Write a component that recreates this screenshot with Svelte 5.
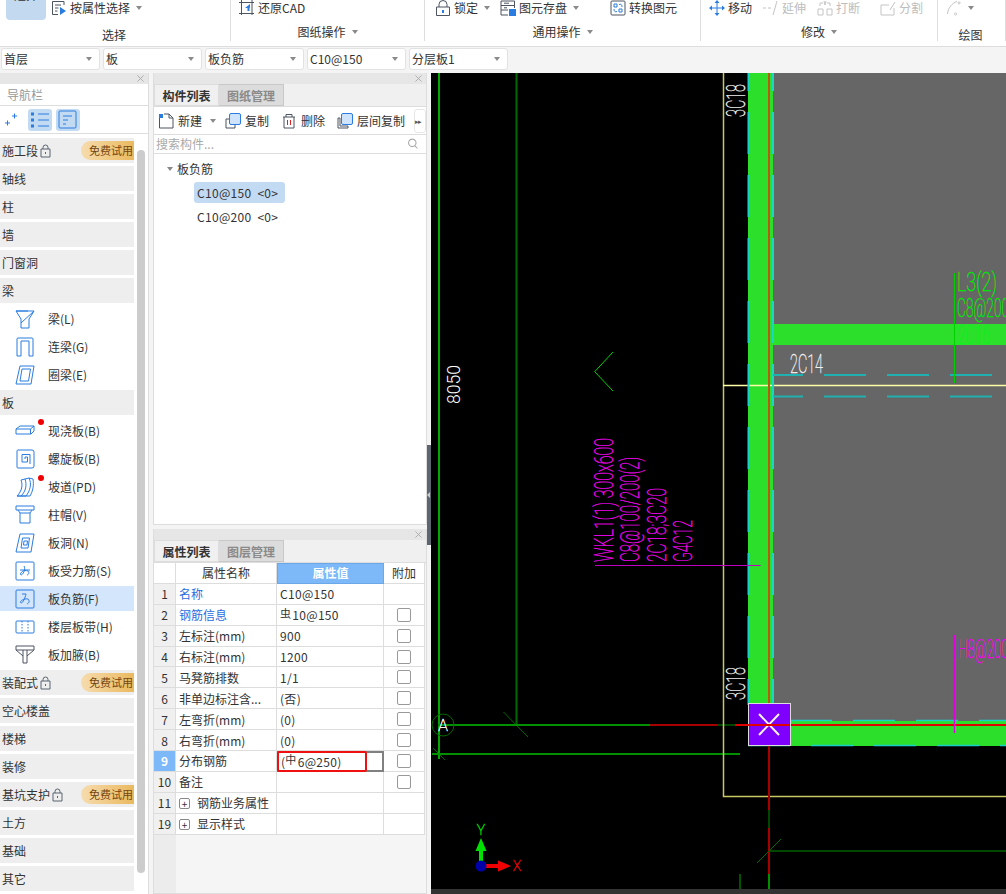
<script>
  const icons = {
    attr: [['dk', 'M13 5V1.5H1.5V14.5H7M4 5H10M4 8H7.5M4 11H6.5'], ['fb', 'M9 7L15 11L9 15Z']],
    cad: [['dk', 'M0 2.5H15M2.5 0V15M0 13.5H15M13 0V15'], ['fb', 'M11 4L6 8H8.5V11H10.5V8.5L11 7Z']],
    lock: [['dk', 'M4 7V4.5a4 4 0 0 1 8 0V7M1.5 7H14.5V15.5H1.5Z'], ['fb', 'M7 10H9V13H7Z']],
    store: [['dk', 'M14.5 8V1H1V15H8M1 5.5H14.5M1 10H8M4 3.2H9M4 7.8H7'], ['fb', 'M9 9H16V16H9Z']],
    convert: [['dk', 'M2 1H14a1 1 0 0 1 1 1V14a1 1 0 0 1-1 1H2a1 1 0 0 1-1-1V2a1 1 0 0 1 1-1Z'], ['bl', 'M4 4H7V7H4ZM9 9H12V12H9ZM9 4.5C11 3.5 12 5 12 7M7 11.5C5 12.5 4 11 4 9']],
    move: [['bl', 'M8 1V15M1 8H15'], ['fb', 'M8 0L5.5 3H10.5ZM8 16L5.5 13H10.5ZM0 8L3 5.5V10.5ZM16 8L13 5.5V10.5Z']],
    extend: [['gr', 'M0 8H3M5 8H8M10 15L14 1']],
    cut: [['gr', 'M1 9H6V15H1ZM10 9H15V15H10ZM3 6V3H6M13 6V3H10M7 1L8 5M9 1L8 5']],
    split: [['gr', 'M1 5H9M1 5V15H14V8M10 10L15 2']],
    arc: [['gr', 'M1.5 14C2 8 6 3 11 1.5M13 2a1 1 0 1 0 .1 0M9.5 13a1 1 0 1 0 .1 0']],
    newdoc: [['dk', 'M1.5 5V15H15V5L11 1H6M11 1V5H15'], ['fb', 'M1 1H5V5H1Z']],
    copy: [['dk', 'M1 6H4M1 6V15H10V12']],
    trash: [['dk', 'M2 4H14M5 4V1.5H11V4M3 4V15H13V4'], ['rd', 'M6.5 7V12M9.5 7V12']],
    floors: [['dk', 'M3 5H1V15H11V13M3 5V13H11']],
    pin: [['bl', 'M1 11H6M3.5 8.5V13.5M8 4H13M10.5 1.5V6.5']],
    list1: [['bl', 'M8 4H19M8 10H19M8 16H19'], ['fb', 'M1 2.5H4V5.5H1ZM1 8.5H4V11.5H1ZM1 14.5H4V17.5H1Z']],
    list2: [['bl', 'M2 1H17a1 1 0 0 1 1 1V17a1 1 0 0 1-1 1H2a1 1 0 0 1-1-1V2a1 1 0 0 1 1-1ZM5 6H14M5 10H10M5 14H8']],
    padlock: [['dm', 'M3 5V3.5a2.5 2.5 0 0 1 5 0V5M1 5H10V13H1ZM5.5 8V10']],
    search: [['sg', 'M7 1.5a5 5 0 1 0 .1 0M10.5 10.5L14 14']],
    beam: [['bl', 'M1 2H19L14 10V19H6V10ZM19 2L6 14M1 2H13']],
    link: [['bl', 'M2 19V2a1 1 0 0 1 1-1H17a1 1 0 0 1 1 1V19H14V4H6V19Z']],
    ring: [['bl', 'M5 1H19L16 19H1ZM7 4H15.5L13.5 16H5Z']],
    slab: [['bl', 'M1 8L5 5H19V10L16 13H1ZM1 8H15.5L19 5M15.5 8V13']],
    spiral: [['bl', 'M3 1H17a2 2 0 0 1 2 2V17a2 2 0 0 1-2 2H3a1 1 0 0 1-1-1V2a1 1 0 0 1 1-1ZM10 10V8H12.5V13H7V5.5H15V15']],
    ramp: [['bl', 'M2 19C7 14 8 8 6 3L14 1C17 7 15 14 11 19ZM6 19C11 14 12 8 10 2M14 1L18 2C19 8 18 14 15 19H2']],
    cap: [['bl', 'M1 1H19V5H1ZM3 5L5 8H15L17 5M5 8V18H15V8']],
    hole: [['bl', 'M5 1H19L16 19H1ZM7.5 5H14.5L13 15H6ZM9 8H12.5L12 12H8.5Z']],
    force: [['bl', 'M2 1H18a1 1 0 0 1 1 1V18a1 1 0 0 1-1 1H2a1 1 0 0 1-1-1V2a1 1 0 0 1 1-1ZM5 9H15M9 5C11 8 8 14 6 14C4 13 8 8 13 10C15 12 13 14 12 14']],
    minus: [['bl', 'M2 1H18a1 1 0 0 1 1 1V18a1 1 0 0 1-1 1H2a1 1 0 0 1-1-1V2a1 1 0 0 1 1-1ZM7 5H11C10 9 8 14 6 14C4 13 8 9 13 10C15 12 14 14 12 15']],
    band: [['bl', 'M2 4H18a1 1 0 0 1 1 1V15a1 1 0 0 1-1 1H2a1 1 0 0 1-1-1V5a1 1 0 0 1 1-1Z'], ['bd', 'M7 4V16M13 4V16']],
    haunch: [['dk', 'M1 1H19V5H1ZM1 5L8 11V18H12V11L19 5M8 5V11M12 5V11']]
  }

  const nav = [
    { name: '施工段', lock: true, trial: true },
    { name: '轴线' },
    { name: '柱' },
    { name: '墙' },
    { name: '门窗洞' },
    { name: '梁', items: [
      { name: '梁(L)', icon: 'beam' },
      { name: '连梁(G)', icon: 'link' },
      { name: '圈梁(E)', icon: 'ring' }
    ] },
    { name: '板', items: [
      { name: '现浇板(B)', icon: 'slab', dot: true },
      { name: '螺旋板(B)', icon: 'spiral' },
      { name: '坡道(PD)', icon: 'ramp', dot: true },
      { name: '柱帽(V)', icon: 'cap' },
      { name: '板洞(N)', icon: 'hole' },
      { name: '板受力筋(S)', icon: 'force' },
      { name: '板负筋(F)', icon: 'minus', active: true },
      { name: '楼层板带(H)', icon: 'band' },
      { name: '板加腋(B)', icon: 'haunch' }
    ] },
    { name: '装配式', lock: true, trial: true },
    { name: '空心楼盖' },
    { name: '楼梯' },
    { name: '装修' },
    { name: '基坑支护', lock: true, trial: true },
    { name: '土方' },
    { name: '基础' },
    { name: '其它' }
  ]

  const selects = ['首层', '板', '板负筋', 'C10@150', '分层板1']

  const props = [
    { no: 1, name: '名称', value: 'C10@150', link: true, noCheck: true },
    { no: 2, name: '钢筋信息', rebar: '虫', value: '10@150', link: true },
    { no: 3, name: '左标注(mm)', value: '900' },
    { no: 4, name: '右标注(mm)', value: '1200' },
    { no: 5, name: '马凳筋排数', value: '1/1' },
    { no: 6, name: '非单边标注含...', value: '(否)' },
    { no: 7, name: '左弯折(mm)', value: '(0)' },
    { no: 8, name: '右弯折(mm)', value: '(0)' },
    { no: 9, name: '分布钢筋', pre: '(', rebar: '中', value: '6@250)', current: true },
    { no: 10, name: '备注', value: '' },
    { no: 11, name: '钢筋业务属性', value: '', group: true, noCheck: true },
    { no: 19, name: '显示样式', value: '', group: true, noCheck: true }
  ]
</script>

{#snippet icon(name, cls = 'ic16')}
  <svg class={cls} viewBox={cls === 'ic16' ? '0 0 16 16' : cls === 'ic11' ? '0 0 11 14' : '0 0 20 20'}>
    {#each icons[name] as p}
      <path class={p[0]} d={p[1]} />
    {/each}
  </svg>
{/snippet}

{#snippet caret()}
  <span class="caret"></span>
{/snippet}

{#snippet closer()}
  <div class="panel-head">
    <svg class="close" viewBox="0 0 8 8"><path d="M0.5 0.5L7.5 7.5M7.5 0.5L0.5 7.5" /></svg>
  </div>
{/snippet}

<div class="page">
  <header class="ribbon">
    <section class="group g1">
      <div class="tools">
        <button class="pick"><span>选择</span></button>
        <div class="tool">{@render icon('attr')}<span>按属性选择</span>{@render caret()}</div>
      </div>
      <div class="label low">选择</div>
    </section>
    <section class="group g2">
      <div class="tools">
        <div class="tool">{@render icon('cad')}<span>还原CAD</span></div>
      </div>
      <div class="label">图纸操作{@render caret()}</div>
    </section>
    <section class="group g3">
      <div class="tools">
        <div class="tool">{@render icon('lock')}<span>锁定</span>{@render caret()}</div>
        <div class="tool">{@render icon('store')}<span>图元存盘</span>{@render caret()}</div>
        <div class="tool">{@render icon('convert')}<span>转换图元</span></div>
      </div>
      <div class="label">通用操作{@render caret()}</div>
    </section>
    <section class="group g4">
      <div class="tools">
        <div class="tool">{@render icon('move')}<span>移动</span></div>
        <div class="tool off">{@render icon('extend')}<span>延伸</span></div>
        <div class="tool off">{@render icon('cut')}<span>打断</span></div>
        <div class="tool off">{@render icon('split')}<span>分割</span></div>
      </div>
      <div class="label">修改{@render caret()}</div>
    </section>
    <section class="group g5">
      <div class="tools">
        <div class="tool off">{@render icon('arc')}{@render caret()}</div>
      </div>
      <div class="label low">绘图</div>
    </section>
  </header>

  <div class="selects">
    {#each selects as s}
      <div class="select"><span>{s}</span>{@render caret()}</div>
    {/each}
  </div>

  <div class="main">
    <aside class="nav">
      {@render closer()}
      <div class="nav-title">导航栏</div>
      <div class="nav-tools">
        <span class="pin">{@render icon('pin')}</span>
        <span class="toggle">{@render icon('list1', 'ic20')}</span>
        <span class="toggle">{@render icon('list2', 'ic20')}</span>
      </div>
      <div class="nav-body">
        <div class="nav-list">
          {#each nav as sec}
            <div class="sec">
              <span>{sec.name}</span>
              {#if sec.lock}{@render icon('padlock', 'ic11')}{/if}
              {#if sec.trial}<span class="trial">免费试用</span>{/if}
            </div>
            {#each sec.items ?? [] as it}
              <div class="item" class:active={it.active}>
                {@render icon(it.icon, 'ic20')}
                <span>{it.name}</span>
                {#if it.dot}<i class="dot"></i>{/if}
              </div>
            {/each}
          {/each}
        </div>
        <div class="scrollbar"></div>
      </div>
    </aside>

    <div class="middle">
      <section class="panel top">
        {@render closer()}
        <div class="tabs">
          <span class="tab on">构件列表</span>
          <span class="tab">图纸管理</span>
        </div>
        <div class="list-tools">
          <div class="lt new">{@render icon('newdoc')}<span>新建</span>{@render caret()}</div>
          <div class="lt">
            <span class="stack">{@render icon('copy')}<span class="front"></span></span><span>复制</span>
          </div>
          <div class="lt">{@render icon('trash')}<span>删除</span></div>
          <div class="lt">
            <span class="stack">{@render icon('floors')}<span class="front"></span></span><span>层间复制</span>
          </div>
          <span class="more">▸▸</span>
        </div>
        <div class="searchbar">
          <span>搜索构件...</span>
          {@render icon('search')}
        </div>
        <div class="tree">
          <div class="tree-root"><i class="tree-arrow"></i>板负筋</div>
          <div class="tree-node sel">C10@150 &nbsp;&lt;0&gt;</div>
          <div class="tree-node">C10@200 &nbsp;&lt;0&gt;</div>
        </div>
      </section>

      <section class="panel bottom">
        {@render closer()}
        <div class="tabs">
          <span class="tab on">属性列表</span>
          <span class="tab">图层管理</span>
        </div>
        <div class="table-wrap">
          <div class="prop-table">
            <div class="th corner"></div>
            <div class="th">属性名称</div>
            <div class="th val">属性值</div>
            <div class="th">附加</div>
            {#each props as row}
              <div class="no" class:cur={row.current}>{row.no}</div>
              <div class="pname" class:link={row.link}>
                {#if row.group}<span class="plus">+</span>{/if}
                {row.name}
              </div>
              <div class="pval" class:focus={row.current}>
                {#if row.pre}{row.pre}{/if}{#if row.rebar}<span class="rebar">{row.rebar}</span>{/if}{row.value}
                {#if row.current}<span class="redbox"></span>{/if}
              </div>
              <div class="padd">
                {#if !row.noCheck}<span class="check"></span>{/if}
              </div>
            {/each}
          </div>
        </div>
      </section>
    </div>

    <div class="splitter"><i></i></div>

    <svg class="canvas" viewBox="431 73 575 821">
      <rect x="431" y="73" width="575" height="821" fill="#000" />

      <!-- slab and beams -->
      <rect x="773" y="73" width="233" height="648" fill="#666" />
      <rect x="748" y="73" width="25" height="632" fill="#2bdf2b" />
      <rect x="773" y="324" width="233" height="21" fill="#2bdf2b" />
      <rect x="790" y="721" width="216" height="25" fill="#2bdf2b" />

      <!-- axis lines -->
      <path class="s2 g-bright" d="M439 73V759" />
      <path class="s2 g-dark" d="M516.5 73V725" />
      <path class="s1 g-dark" d="M503.5 712L528 737M433 748L445 760" />
      <path class="s2 g-mid" d="M438 725H650" />
      <path class="s2 red-d" d="M650 725H717" />
      <path class="s2 g-deep" d="M717 725H748" />
      <path class="s2 g-mid" d="M432 754H740" />
      <circle cx="443" cy="725" r="11" class="s1 g-dark" fill="none" />
      <text class="cad white" x="443" y="731" font-size="16" text-anchor="middle">A</text>

      <!-- frame -->
      <path class="s15 yellow" d="M723.5 73V796.5H1006" />
      <path class="s15 yellow-b" d="M723 385.5H1006" />

      <!-- rebar dashes -->
      <path class="s2 cyan" stroke-dasharray="42 21" d="M748.5 49V705" />
      <path class="s2 cyan-b" stroke-dasharray="42 21" d="M773 49V705" />
      <path class="s2 cyan-d" stroke-dasharray="42 21" d="M824 375H1006M824 396.5H1006" />
      <path class="s2 cyan-d" d="M773 375H803M773 396.5H803" />
      <path class="s15 cyan" stroke-dasharray="42 21" d="M790 720.5H1006M748 745.5H1006" />

      <path class="s2 orange" d="M769 73V703" />

      <!-- crosshair -->
      <path class="s2 red" d="M735 725H1006" />
      <path class="s2 red-d" d="M769 746V810" />
      <path class="s2 g-deep" d="M769 810V828" />
      <path class="s2 red-d" d="M769 828V874" />
      <path class="s2 g-mid" d="M769 874V890" />
      <path class="s2 g-deep" d="M769 851H1006" />
      <path class="s1 g-dark" d="M781 839L757 863" />
      <path class="s1 g-bright" d="M740 874V890" />

      <!-- corner column -->
      <rect x="748.5" y="703.5" width="42" height="42" fill="#8000ff" stroke="#ddd" />
      <path class="s2 white-l" d="M759 714L779 735M779 714L759 735" />
      <path class="s2 red" d="M748 725H790" />

      <!-- leaders -->
      <path class="s1 g-bright2" d="M613 352L594.7 371.7L613 391" />
      <path class="s1 magenta-d" d="M595 565.5H760.5" />
      <path class="s15 magenta" d="M954.5 635V733" />
      <path class="s1 g-bright2" d="M954.5 273V383" />

      <!-- annotations -->
      <g class="cad magenta-t">
        <text transform="translate(613 562) rotate(-90)" font-size="25" textLength="124" lengthAdjust="spacingAndGlyphs">WKL1(1) 300x600</text>
        <text transform="translate(639 562) rotate(-90)" font-size="25" textLength="105" lengthAdjust="spacingAndGlyphs">C8@100/200(2)</text>
        <text transform="translate(666 562) rotate(-90)" font-size="25" textLength="74" lengthAdjust="spacingAndGlyphs">2C18;3C20</text>
        <text transform="translate(692 562) rotate(-90)" font-size="25" textLength="42" lengthAdjust="spacingAndGlyphs">G4C12</text>
        <text x="958" y="658" font-size="25" textLength="50" lengthAdjust="spacingAndGlyphs">H8@200</text>
      </g>
      <g class="cad white">
        <text transform="translate(745 117) rotate(-90)" font-size="25" textLength="33" lengthAdjust="spacingAndGlyphs">3C18</text>
        <text transform="translate(745 700) rotate(-90)" font-size="25" textLength="33" lengthAdjust="spacingAndGlyphs">3C18</text>
        <text x="790" y="373" font-size="25" textLength="33" lengthAdjust="spacingAndGlyphs">2C14</text>
        <text class="dim" transform="translate(460 404) rotate(-90)" font-size="18" textLength="39" lengthAdjust="spacingAndGlyphs">8050</text>
      </g>
      <g class="cad green-t">
        <text x="957" y="291" font-size="25" textLength="40" lengthAdjust="spacingAndGlyphs">L3(2)</text>
        <text x="957" y="317" font-size="25" textLength="52" lengthAdjust="spacingAndGlyphs">C8@200</text>
        <text class="bright" x="957" y="344" font-size="25" textLength="33" lengthAdjust="spacingAndGlyphs">2C16</text>
      </g>

      <!-- ucs -->
      <rect x="479" y="850" width="4" height="16" fill="#00e000" />
      <path class="head-g" d="M481 838L475.500 851H486.500Z" />
      <rect x="481" y="864" width="20" height="4" fill="#f00000" />
      <path class="head-r" d="M511 866L498 860.500V871.500Z" />
      <circle cx="481" cy="866" r="5.5" fill="#0000a8" />
      <text class="cad axis-y" x="481" y="835" font-size="14" text-anchor="middle">Y</text>
      <text class="cad axis-x" x="517" y="871" font-size="14" text-anchor="middle">X</text>

      <rect x="431" y="889" width="575" height="5" fill="#333" />
    </svg>
  </div>
</div>

<style>
  :global(body) {
    margin: 0;
    overflow: hidden;
    background: #f4f4f4;
  }

  .page {
    width: 1006px;
    height: 894px;
    display: flex;
    flex-direction: column;
    overflow: hidden;
    font-family: "Noto Sans CJK SC", "Noto Sans", sans-serif;
    font-size: 12px;
    color: #333;
    line-height: 16px;
  }

  svg path {
    fill: none;
    stroke-width: 1;
  }

  .ic16 { width: 16px; height: 16px; flex-shrink: 0; }
  .ic20 { width: 20px; height: 20px; flex-shrink: 0; }
  .ic11 { width: 11px; height: 14px; flex-shrink: 0; }

  svg .dk { stroke: #4c5560; }
  svg .bl { stroke: #2a7ce0; }
  svg .fb { fill: #2a7ce0; stroke: none; }
  svg .gr { stroke: #c4c4c4; }
  svg .rd { stroke: #e02020; }
  svg .dm { stroke: #5a6470; }
  svg .sg { stroke: #aaa; stroke-width: 1.4; }
  svg .bd { stroke: #2a7ce0; stroke-dasharray: 1.5 1.5; }
  svg .head-g { fill: #00e000; stroke: none; }
  svg .head-r { fill: #f00000; stroke: none; }

  /* ribbon */
  .ribbon {
    height: 46px;
    flex-shrink: 0;
    display: flex;
    background: #fff;
    border-bottom: 1px solid #ddd;
  }

  .group {
    position: relative;
    height: 41px;
    flex-shrink: 0;
    display: flex;
    flex-direction: column;
    border-right: 1px solid #ddd;
    box-sizing: border-box;
  }

  .g1 { width: 231px; }
  .g2 { width: 194px; }
  .g3 { width: 276px; }
  .g4 { width: 237px; }
  .g5 { width: 68px; }

  .tools {
    height: 26px;
    display: flex;
    align-items: flex-start;
  }

  .g1 .tools { padding-left: 6px; gap: 5px; }
  .g2 .tools { padding-left: 8px; }
  .g3 .tools {
    display: grid;
    grid-template-columns: 65px 110px auto;
    padding-left: 10px;
  }
  .g4 .tools {
    display: grid;
    grid-template-columns: 54px 54px 63px auto;
    padding-left: 8px;
  }
  .g5 .tools { padding-left: 8px; }

  .tool {
    display: flex;
    align-items: center;
    gap: 3px;
    height: 16px;
    white-space: nowrap;
  }

  .off { color: #bdbdbd; }

  .tool :global(.caret) { margin-left: 3px; }

  .pick {
    width: 40px;
    height: 20px;
    padding: 0;
    border: none;
    background: #c3d9f0;
    border-radius: 0 0 4px 4px;
    font: inherit;
    color: #333;
    position: relative;
    overflow: hidden;
  }

  .pick span {
    position: absolute;
    left: 8px;
    top: -13px;
  }

  .label {
    display: flex;
    align-items: center;
    justify-content: center;
    gap: 6px;
    height: 12px;
    color: #333;
  }

  .low {
    padding-top: 3px;
    padding-right: 2px;
  }

  .caret {
    display: inline-block;
    width: 0;
    height: 0;
    border-left: 3px solid transparent;
    border-right: 3px solid transparent;
    border-top: 4px solid #8a8a8a;
    flex-shrink: 0;
  }

  /* selects */
  .selects {
    height: 26px;
    flex-shrink: 0;
    box-sizing: border-box;
    padding: 1px 0 0 1px;
    display: flex;
    gap: 3px;
  }

  .select {
    width: 99px;
    height: 22px;
    box-sizing: border-box;
    padding: 0 7px 0 2px;
    display: flex;
    align-items: center;
    justify-content: space-between;
    background: #fff;
    border: 1px solid #e2e2e2;
    border-radius: 3px;
  }

  /* layout */
  .main {
    flex: 1;
    min-height: 0;
    display: flex;
  }

  .panel-head {
    height: 11px;
    flex-shrink: 0;
    display: flex;
    justify-content: flex-end;
    align-items: center;
    padding-right: 4px;
    background: #e6e6e6;
  }

  .close { width: 7px; height: 7px; }
  .close path { stroke: #a8a8a8; }

  /* nav */
  .nav {
    width: 148px;
    flex-shrink: 0;
    display: flex;
    flex-direction: column;
    background: #fff;
    border-right: 1px solid #ddd;
    margin-right: 4px;
  }

  .nav-title {
    height: 22px;
    box-sizing: border-box;
    padding: 3px 0 0 7px;
    color: #999;
    border-bottom: 1px solid #ddd;
  }

  .nav-tools {
    height: 28px;
    box-sizing: border-box;
    display: flex;
    align-items: center;
    gap: 4px;
    border-bottom: 1px solid #ddd;
  }

  .pin {
    width: 24px;
    display: flex;
    justify-content: center;
  }

  .toggle {
    width: 24px;
    height: 22px;
    display: flex;
    align-items: center;
    justify-content: center;
    background: #c3daf3;
    border-radius: 3px;
  }

  .nav-body {
    flex: 1;
    min-height: 0;
    display: flex;
    gap: 3px;
    overflow: hidden;
    padding-top: 4px;
  }

  .nav-list {
    width: 134px;
    flex-shrink: 0;
  }

  .scrollbar {
    width: 8px;
    height: 723px;
    margin-top: 12px;
    background: #ccc;
    border-radius: 4px;
  }

  .sec {
    height: 25px;
    margin-bottom: 3px;
    padding-left: 2px;
    display: flex;
    align-items: center;
    gap: 2px;
    background: #eee;
  }

  .trial {
    margin-left: auto;
    width: 53px;
    height: 19px;
    box-sizing: border-box;
    padding-left: 8px;
    font-size: 11px;
    line-height: 19px;
    color: #74460f;
    white-space: nowrap;
    border-radius: 10px 0 0 10px;
    background: linear-gradient(90deg, #f6dcae, #eab95f);
  }

  .item {
    position: relative;
    height: 25px;
    margin-bottom: 3px;
    padding-left: 15px;
    display: flex;
    align-items: center;
    gap: 13px;
  }

  .item.active { background: #d3e6fb; }

  .dot {
    position: absolute;
    left: 38px;
    top: 1px;
    width: 6px;
    height: 6px;
    border-radius: 50%;
    background: #f00000;
  }

  /* middle column */
  .middle {
    width: 274px;
    flex-shrink: 0;
    display: flex;
    flex-direction: column;
    gap: 4px;
  }

  .panel {
    display: flex;
    flex-direction: column;
    box-sizing: border-box;
    border: 1px solid #ddd;
    border-top: none;
    background: #fff;
  }

  .top { height: 452px; }
  .bottom { flex: 1; min-height: 0; background: #f3f3f3; }

  .tabs {
    height: 23px;
    flex-shrink: 0;
    box-sizing: border-box;
    display: flex;
    background: #f0f0f0;
    border-bottom: 1px solid #ddd;
  }

  .tab {
    width: 65px;
    box-sizing: border-box;
    text-align: center;
    line-height: 21px;
    font-weight: 700;
    color: #8a8a8a;
    background: #dcdcdc;
    border: 1px solid #c8c8c8;
    border-left: none;
  }

  .tab.on {
    color: #333;
    background: #f0f0f0;
    border-left: 1px solid #ddd;
    border-color: #ddd;
  }

  .list-tools {
    height: 28px;
    flex-shrink: 0;
    box-sizing: border-box;
    padding: 1px 0 0 4px;
    display: flex;
    align-items: center;
    border-bottom: 1px solid #ddd;
  }

  .lt {
    display: flex;
    align-items: center;
    gap: 4px;
    margin-right: 12px;
    white-space: nowrap;
  }

  .lt.new { gap: 4px; margin-right: 9px; }
  .lt.new :global(.caret) { margin-left: 4px; }

  .stack {
    position: relative;
    width: 16px;
    height: 16px;
    display: block;
  }

  .front {
    position: absolute;
    top: 0;
    right: 0;
    width: 10px;
    height: 10px;
    background: #cfe3fa;
    border: 1px solid #2a7ce0;
    border-radius: 2px;
  }

  .more {
    margin-left: -3px;
    width: 10px;
    height: 22px;
    font-size: 7px;
    line-height: 22px;
    letter-spacing: -1px;
    color: #555;
    border: 1px solid #e6e6e6;
    border-radius: 3px;
    white-space: nowrap;
  }

  .searchbar {
    height: 19px;
    flex-shrink: 0;
    box-sizing: border-box;
    padding: 0 7px 0 2px;
    display: flex;
    align-items: center;
    justify-content: space-between;
    color: #aaa;
    border-bottom: 1px solid #ddd;
  }

  .searchbar :global(svg) { width: 12px; height: 12px; }

  .tree { padding-top: 7px; }

  .tree-root {
    position: relative;
    height: 16px;
    padding-left: 23px;
  }

  .tree-arrow {
    position: absolute;
    left: 13px;
    top: 6px;
    border-left: 3.5px solid transparent;
    border-right: 3.5px solid transparent;
    border-top: 4px solid #888;
  }

  .tree-node {
    margin: 0 0 3px 40px;
    width: 88px;
    height: 21px;
    padding-left: 3px;
    line-height: 21px;
    letter-spacing: 0.3px;
    border-radius: 3px;
    white-space: nowrap;
  }

  .tree-node.sel {
    margin-top: 5px;
    background: #c3daf3;
  }

  /* properties */
  .table-wrap {
    flex: 1;
    display: flex;
    background: linear-gradient(90deg, #ececec 22px, #f5f5f5 22px);
  }

  .prop-table {
    display: grid;
    grid-template-columns: 22px 101px 107px 41px;
    grid-auto-rows: 20.9px;
    width: 271px;
    align-self: flex-start;
    background: #fff;
  }

  .prop-table > div {
    box-sizing: border-box;
    border-right: 1px solid #ddd;
    border-bottom: 1px solid #ddd;
    display: flex;
    align-items: center;
    white-space: nowrap;
  }

  .th { justify-content: center; }
  .th.val { background: #7db8f8; color: #fff; font-weight: 700; border: 1px solid #6aa8ea; }
  .no { justify-content: center; background: #f0f0f0; padding-top: 1px; }
  .no.cur { background: #7db8f8; color: #fff; font-weight: 700; }
  .pname { padding: 1px 0 0 3px; gap: 5px; }
  .pname.link { color: #2a6de0; }
  .pval { padding: 1px 0 0 3px; position: relative; letter-spacing: 0.3px; }
  .padd { justify-content: center; }

  .prop-table > .focus {
    border: 2px solid #808080;
    padding-left: 2px;
  }

  .rebar {
    font-size: 11px;
    line-height: 11px;
    margin-bottom: 4px;
    margin-right: 1px;
  }

  .redbox {
    position: absolute;
    left: -2px;
    top: -2px;
    width: 90px;
    height: 21px;
    box-sizing: border-box;
    border: 2.5px solid #f01010;
    border-radius: 2px;
  }

  .check {
    width: 14px;
    height: 14px;
    box-sizing: border-box;
    border: 1px solid #999;
    border-radius: 2px;
    background: #fff;
  }

  .plus {
    width: 11px;
    height: 11px;
    box-sizing: border-box;
    border: 1px solid #888;
    border-radius: 2px;
    font-size: 10px;
    line-height: 9px;
    text-align: center;
    margin-right: 2px;
  }

  /* splitter */
  .splitter {
    width: 4px;
    height: 100px;
    margin-top: 372px;
    flex-shrink: 0;
    background: #5d6670;
    display: flex;
    align-items: center;
  }

  .splitter i {
    border-top: 3px solid transparent;
    border-bottom: 3px solid transparent;
    border-right: 3px solid #ccc;
  }

  /* canvas */
  .canvas {
    width: 575px;
    height: 821px;
    flex-shrink: 0;
    display: block;
  }

  .s1 { stroke-width: 1; }
  svg path.s15 { stroke-width: 1.5; }
  svg path.s2 { stroke-width: 2; }
  .g-bright { stroke: #00a800; }
  .g-bright2 { stroke: #00d000; }
  .g-mid { stroke: #009000; }
  .g-dark { stroke: #006800; }
  .g-deep { stroke: #004800; }
  .red { stroke: #e00000; }
  .red-d { stroke: #a80000; }
  .yellow { stroke: #c8c860; }
  .yellow-b { stroke: #ffffa8; }
  .cyan { stroke: #18d0c8; }
  .cyan-b { stroke: #18d8c0; }
  .cyan-d { stroke: #20b0b0; }
  .orange { stroke: #b85a10; }
  .white-l { stroke: #f4f4f4; }
  .magenta { stroke: #e000e0; }
  .magenta-d { stroke: #c000c0; }

  .cad {
    font-family: Roboto, "Liberation Sans", sans-serif;
    font-weight: 100;
    stroke-width: 0.45px;
  }

  .cad.white, .white { fill: #f0f0f0; stroke: #f0f0f0; }
  .magenta-t { fill: #f000f0; stroke: #f000f0; }
  .green-t { fill: #00e800; stroke: #00e800; }
  .green-t .bright { fill: #10f020; stroke: #10f020; }
  .dim { font-weight: 300; fill: #fff; stroke: none; }
  .axis-y { fill: #00e000; stroke: #00e000; }
  .axis-x { fill: #f00000; stroke: #f00000; }
</style>
